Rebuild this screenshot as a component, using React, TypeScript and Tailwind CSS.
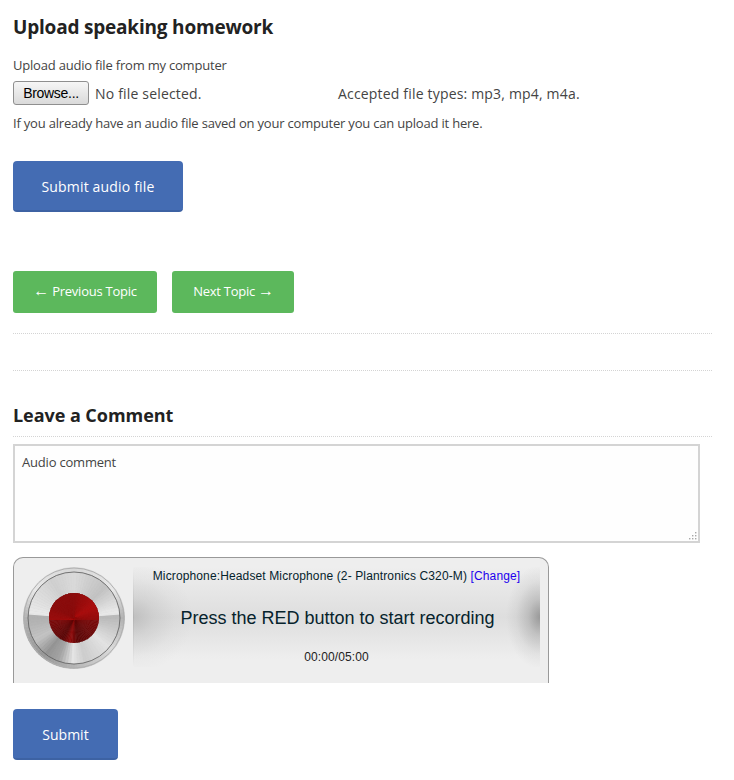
type Stop = [number, number];

function shade(stops: Stop[], a: number) {
  for (let i = 0; i < stops.length - 1; i++) {
    const [a0, c0] = stops[i];
    const [a1, c1] = stops[i + 1];
    if (a >= a0 && a <= a1) {
      const t = a1 === a0 ? 0 : (a - a0) / (a1 - a0);
      return c0 + (c1 - c0) * t;
    }
  }
  return stops[stops.length - 1][1];
}

function wedges(stops: Stop[], tint: (v: number) => string, r: number, cx = 51, cy = 51) {
  const out = [];
  const step = 4;
  for (let a = 0; a < 360; a += step) {
    const p = (d: number) => {
      const rad = ((d - 90) * Math.PI) / 180;
      return `${(cx + r * Math.cos(rad)).toFixed(2)},${(cy + r * Math.sin(rad)).toFixed(2)}`;
    };
    const c = tint(shade(stops, a + step / 2));
    out.push(<polygon key={a} points={`${cx},${cy} ${p(a)} ${p(a + step)}`} fill={c} stroke={c} strokeWidth="0.6" />);
  }
  return out;
}

const gray = (v: number) => {
  const n = Math.round(v);
  return `rgb(${n},${n},${n})`;
};
const crimson = (v: number) => {
  const n = Math.round(v);
  return `rgb(${n},${Math.round(n * 0.09)},${Math.round(n * 0.09)})`;
};

const rimStops: Stop[] = [[0, 214], [55, 232], [90, 178], [130, 218], [180, 182], [220, 150], [270, 178], [305, 232], [360, 214]];
const upperStops: Stop[] = [[0, 218], [45, 194], [80, 232], [280, 232], [330, 208], [360, 218]];
const lowerStops: Stop[] = [[0, 185], [90, 186], [130, 226], [165, 205], [182, 228], [200, 165], [218, 148], [240, 196], [270, 176], [360, 185]];
const redUpper: Stop[] = [[0, 140], [60, 172], [110, 140], [250, 165], [300, 140], [360, 140]];
const redLower: Stop[] = [[0, 110], [100, 122], [150, 100], [172, 92], [190, 145], [208, 92], [260, 122], [360, 110]];

function RecordDisc() {
  return (
    <svg width="102" height="102" viewBox="0 0 102 102">
      <defs>
        <clipPath id="faceClip"><circle cx="51" cy="51" r="46" /></clipPath>
        <clipPath id="redClip"><circle cx="51" cy="51" r="25" /></clipPath>
        <clipPath id="upperClip"><path d="M0 0H102V47Q51 53 0 47Z" /></clipPath>
        <clipPath id="redUpperClip"><path d="M0 0H102V53H0Z" /></clipPath>
      </defs>
      {wedges(rimStops, gray, 50.5)}
      <circle cx="51" cy="51" r="50" fill="none" stroke="#b0b0b0" strokeWidth="1" />
      <g clipPath="url(#faceClip)">
        {wedges(lowerStops, gray, 47)}
        <g clipPath="url(#upperClip)">{wedges(upperStops, gray, 47)}</g>
      </g>
      <circle cx="51" cy="51" r="46" fill="none" stroke="#5a5a5a" strokeWidth="0.8" />
      <g clipPath="url(#redClip)">
        {wedges(redLower, crimson, 26)}
        <g clipPath="url(#redUpperClip)">{wedges(redUpper, crimson, 26)}</g>
      </g>
    </svg>
  );
}

function Grip() {
  const dots = [[9, 1], [6, 4], [9, 4], [3, 7], [6, 7], [9, 7]];
  return (
    <svg width="11" height="9" viewBox="0 0 11 9" className="absolute right-[3px] bottom-[3px]">
      {dots.map(([x, y]) => (
        <rect key={`${x}-${y}`} x={x} y={y} width="1.4" height="1.4" fill="#a8a8a8" />
      ))}
    </svg>
  );
}

export default function App() {
  return (
    <div className="w-[734px] h-[780px] bg-white overflow-hidden pl-[13px] font-['Open_Sans',sans-serif] text-[#444]">
      <h2 className="pt-[14px] text-[19px] leading-[27px] tracking-[-0.2px] font-bold text-[#222]">Upload speaking homework</h2>
      <p className="mt-[15px] text-[13px] leading-[18px] tracking-[-0.2px]">Upload audio file from my computer</p>
      <div className="mt-[7px] flex items-center h-[24px] text-[14px] tracking-[0.18px]">
        <button className="w-[76px] h-[24px] pt-[1px] rounded-[3px] border border-[#8f8f8f] bg-gradient-to-b from-[#f6f6f6] to-[#dadada] text-[14px] tracking-[-0.3px] font-['Liberation_Sans',sans-serif] text-black">Browse...</button>
        <span className="ml-[6px] w-[243px]">No file selected.</span>
        <span>Accepted file types: mp3, mp4, m4a.</span>
      </div>
      <p className="mt-[9px] text-[13px] leading-[18px] tracking-[-0.2px]">If you already have an audio file saved on your computer you can upload it here.</p>
      <button className="mt-[29px] block w-[170px] h-[51px] pt-[2px] rounded-[4px] bg-[#446cb3] border-b-2 border-[#3d62a3] text-white text-[14px] tracking-[0.18px]">Submit audio file</button>
      <div className="mt-[59px] flex gap-[15px]">
        <button className="w-[144px] h-[42px] pb-[2px] rounded-[3px] bg-[#5cb85c] text-white text-[13px] leading-[18px] tracking-[-0.25px]"><span className="font-['Liberation_Sans',sans-serif] text-[16px] leading-[16px]">←</span> Previous Topic</button>
        <button className="w-[122px] h-[42px] pb-[2px] pl-[1px] rounded-[3px] bg-[#5cb85c] text-white text-[13px] leading-[18px] tracking-[-0.25px]">Next Topic <span className="font-['Liberation_Sans',sans-serif] text-[16px] leading-[16px]">→</span></button>
      </div>
      <div className="mt-[20px] w-[699px] border-t border-dotted border-[#d4d4d4]" />
      <div className="mt-[36px] w-[699px] border-t border-dotted border-[#d4d4d4]" />
      <h3 className="mt-[32px] w-[699px] pb-[8px] border-b border-dotted border-[#d4d4d4] text-[18px] leading-[25px] tracking-[-0.05px] font-bold text-[#222]">Leave a Comment</h3>
      <div className="relative mt-[7px] w-[687px] h-[99px]">
        <textarea
          readOnly
          value="Audio comment"
          className="block w-full h-full resize-none border-2 border-[#d4d4d4] bg-[#fefefe] px-[7px] pt-[7px] pb-[8px] text-[13px] leading-[18px] tracking-[-0.2px] text-[#444] outline-none"
        />
        <Grip />
      </div>
      <div className="mt-[14px] w-[536px] h-[126px] flex rounded-t-[10px] border border-b-0 border-[#999] bg-[#eeeeee]">
        <div className="w-[119px] shrink-0 pl-[9px] pt-[9px]">
          <RecordDisc />
        </div>
        <div className="relative w-[407px] h-[100px] mt-[9px] text-center font-['Liberation_Sans',sans-serif] bg-[linear-gradient(to_bottom,#eeeeee_0%,#dedede_50%,#eeeeee_92%)]">
          <div className="absolute inset-y-0 left-0 w-[60px] bg-[radial-gradient(ellipse_60px_56px_at_left_center,rgba(170,170,170,0.6)_0%,rgba(170,170,170,0.28)_35%,rgba(170,170,170,0.08)_70%,transparent_100%)]" />
          <div className="absolute inset-y-0 left-0 w-px bg-gradient-to-b from-[#eeeeee] via-[#b4b4b4] to-[#eeeeee]" />
          <div className="absolute inset-y-0 right-0 w-[34px] bg-[radial-gradient(ellipse_34px_52px_at_right_center,rgba(130,130,130,0.75)_0%,rgba(130,130,130,0.35)_35%,rgba(130,130,130,0.1)_70%,transparent_100%)]" />
          <div className="relative">
            <p className="text-[12px] leading-[18px] tracking-[0.13px] text-[#06232c]">Microphone:Headset Microphone (2- Plantronics C320-M) <span className="text-[#2200ee]">[Change]</span></p>
            <p className="mt-[22px] pl-[2px] text-[18px] leading-[22px] text-[#06232c]">Press the RED button to start recording</p>
            <p className="mt-[20px] text-[12px] leading-[16px] tracking-[0.1px] text-[#222]">00:00/05:00</p>
          </div>
        </div>
      </div>
      <button className="mt-[26px] block w-[105px] h-[51px] pt-[2px] rounded-[4px] bg-[#446cb3] border-b-2 border-[#3d62a3] text-white text-[14px]">Submit</button>
    </div>
  );
}
